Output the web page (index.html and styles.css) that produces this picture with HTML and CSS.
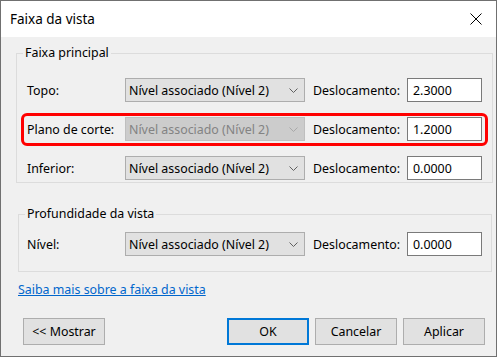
FILE: index.html
```html
<!DOCTYPE html>
<html>
<head>
    <link rel="stylesheet" href="styles.css">
</head>
<body>

<div class="dialog">
    <div class="titlebar">
        <span class="title">Faixa da vista</span>
        <svg class="close" width="12" height="12" viewBox="0 0 12 12">
            <path d="M0.5 0.5 L11.5 11.5 M11.5 0.5 L0.5 11.5" stroke="#000" stroke-width="1" fill="none"/>
        </svg>
    </div>

    <div class="content">
        <fieldset class="group group-main">
            <legend>Faixa principal</legend>
            <div class="rows">
                <div class="row">
                    <span class="label">Topo:</span>
                    <div class="select">
                        <span>Nível associado (Nível 2)</span>
                        <svg class="chevron" width="9" height="5" viewBox="0 0 9 5"><path d="M0.5 0.5 L4.5 4.5 L8.5 0.5" stroke="#606060" fill="none"/></svg>
                    </div>
                    <span class="offset-label">Deslocamento:</span>
                    <div class="field">2.3000</div>
                </div>
                <div class="row highlight">
                    <span class="label">Plano de corte:</span>
                    <div class="select disabled">
                        <span>Nível associado (Nível 2)</span>
                        <svg class="chevron" width="9" height="5" viewBox="0 0 9 5"><path d="M0.5 0.5 L4.5 4.5 L8.5 0.5" stroke="#a8a8a8" fill="none"/></svg>
                    </div>
                    <span class="offset-label">Deslocamento:</span>
                    <div class="field">1.2000</div>
                </div>
                <div class="row">
                    <span class="label">Inferior:</span>
                    <div class="select">
                        <span>Nível associado (Nível 2)</span>
                        <svg class="chevron" width="9" height="5" viewBox="0 0 9 5"><path d="M0.5 0.5 L4.5 4.5 L8.5 0.5" stroke="#606060" fill="none"/></svg>
                    </div>
                    <span class="offset-label">Deslocamento:</span>
                    <div class="field">0.0000</div>
                </div>
            </div>
        </fieldset>

        <fieldset class="group group-depth">
            <legend>Profundidade da vista</legend>
            <div class="row">
                <span class="label">Nível:</span>
                <div class="select">
                    <span>Nível associado (Nível 2)</span>
                    <svg class="chevron" width="9" height="5" viewBox="0 0 9 5"><path d="M0.5 0.5 L4.5 4.5 L8.5 0.5" stroke="#606060" fill="none"/></svg>
                </div>
                <span class="offset-label">Deslocamento:</span>
                <div class="field">0.0000</div>
            </div>
        </fieldset>

        <a class="help-link" href="#">Saiba mais sobre a faixa da vista</a>

        <div class="buttons">
            <button class="btn btn-show">&lt;&lt; Mostrar</button>
            <button class="btn btn-default">OK</button>
            <button class="btn">Cancelar</button>
            <button class="btn">Aplicar</button>
        </div>
    </div>
</div>

</body>
</html>
```

FILE: styles.css
```css
body, html {
    margin: 0;
    height: 100%;
    font-family: "Noto Sans", "Open Sans", sans-serif;
    font-size: 12.4px;
    color: #000;
}

.dialog {
    width: 497px;
    height: 357px;
    box-sizing: border-box;
    border: 1px solid #707070;
    background-color: #f0f0f0;
    display: flex;
    flex-direction: column;
}

.titlebar {
    height: 36px;
    background-color: #fff;
    display: flex;
    align-items: center;
    justify-content: space-between;
    padding: 0 14px 0 9px;
}

.title {
    font-size: 13.5px;
}

.close {
    display: block;
}

.content {
    flex: 1;
    display: flex;
    flex-direction: column;
    padding: 0 3px 0 15px;
}

.group {
    margin: 0;
    border: 1px solid #dcdcdc;
    min-width: 0;
}

.group legend {
    line-height: 16px;
    padding: 0 2px;
}

.group-main {
    margin-top: 8px;
    padding: 17px 9px 2px 10px;
}

.group-main legend {
    margin-left: -4px;
}

.group-depth {
    margin: 23px 1px 0 2px;
    padding: 10px 9px 15px 8px;
}

.group-depth legend {
    margin-left: -2px;
}

.rows {
    display: flex;
    flex-direction: column;
    gap: 15px;
}

.row {
    display: grid;
    grid-template-columns: 98px 180px 102px 75px;
    align-items: center;
    height: 24px;
    position: relative;
}

.row.highlight::after {
    content: "";
    position: absolute;
    top: -4px;
    bottom: -5px;
    left: -6px;
    right: -5px;
    border: 3px solid #ff0000;
    border-radius: 6px;
}

.select {
    height: 24px;
    box-sizing: border-box;
    border: 1px solid #adadad;
    background-color: #e1e1e1;
    display: flex;
    align-items: center;
    justify-content: space-between;
    padding: 0 6px 0 3px;
}

.select.disabled {
    background-color: #cccccc;
    border-color: #bfbfbf;
    color: #838383;
}

.chevron {
    display: block;
}

.offset-label {
    padding-left: 8px;
}

.field {
    height: 24px;
    box-sizing: border-box;
    border: 1px solid #7a7a7a;
    background-color: #fff;
    padding-left: 5px;
    display: flex;
    align-items: center;
}

.help-link {
    margin: 10px 0 0 2px;
    line-height: 16px;
    color: #0066cc;
    align-self: flex-start;
}

.buttons {
    display: flex;
    gap: 6px;
    margin-top: 20px;
    padding: 0 8px 0 7px;
}

.btn {
    width: 82px;
    height: 27px;
    font-family: inherit;
    font-size: 12.4px;
    color: #000;
    background-color: #e1e1e1;
    border: 1px solid #adadad;
    padding: 0;
}

.btn-show {
    margin-right: auto;
}

.btn-default {
    border: 2px solid #0078d7;
}
```
